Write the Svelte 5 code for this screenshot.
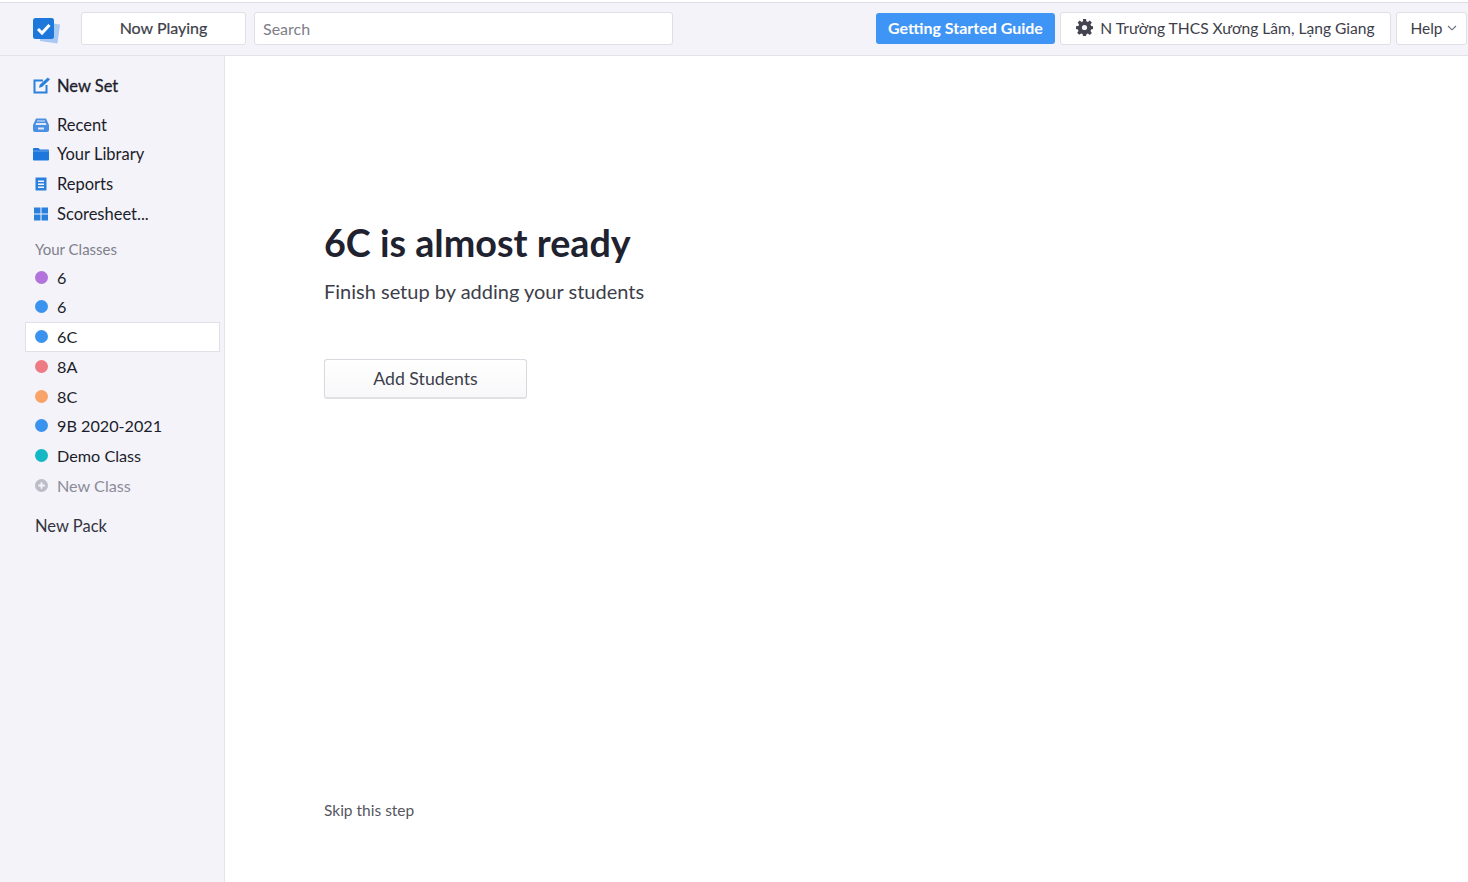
<script lang="ts">
  const nav = [
    { label: "Recent", icon: "recent" },
    { label: "Your Library", icon: "folder" },
    { label: "Reports", icon: "reports" },
    { label: "Scoresheet...", icon: "grid" }
  ];
  const classes = [
    { name: "6", color: "#b274dc" },
    { name: "6", color: "#3b93f0" },
    { name: "6C", color: "#3b93f0", active: true },
    { name: "8A", color: "#ee7a83" },
    { name: "8C", color: "#f9a369" },
    { name: "9B 2020-2021", color: "#3b93f0" },
    { name: "Demo Class", color: "#13b8c4" }
  ];
</script>

<div class="page">
  <header class="topbar">
    <svg class="logo" width="28" height="26" viewBox="0 0 28 26">
      <path d="M9 4l18 2.500-2.500 19L7 23z" fill="#a9c9f2" />
      <rect x="0" y="0" width="21" height="21" rx="2.500" fill="#1e78dc" />
      <path d="M5 11l4 4 7.500-8" fill="none" stroke="#fff" stroke-width="3" />
    </svg>
    <button class="btn now">Now Playing</button>
    <input class="search" placeholder="Search" />
    <div class="spacer"></div>
    <button class="guide">Getting Started Guide</button>
    <button class="btn school">
      <svg width="17" height="17" viewBox="0 0 17 17">
        <path d="M7 0h3l.4 2.300 1.500.6L13.800 1.600l2 2-1.300 1.900.6 1.500L17 7.300v2.800l-1.900.4-.6 1.500 1.300 1.900-2 2-1.900-1.300-1.500.6L10 17H7l-.4-1.900-1.500-.6-1.900 1.300-2-2 1.300-1.900-.6-1.500L0 10V7.300l2.400-.3.600-1.500-1.300-1.900 2-2 1.900 1.300 1.500-.6z" fill="#43444f" />
        <circle cx="8.500" cy="8.500" r="2.600" fill="#f3f3f9" />
      </svg>
      N Trường THCS Xương Lâm, Lạng Giang
    </button>
    <button class="btn help">
      Help
      <svg width="10" height="6" viewBox="0 0 10 6"><path d="M1 1l4 3.800L9 1" fill="none" stroke="#6a6b75" stroke-width="1.100" /></svg>
    </button>
  </header>

  <div class="body">
    <aside class="sidebar">
      <div class="item newset">
        <svg class="ico" width="18" height="17" viewBox="0 0 18 17">
          <path d="M10 3.500H1.500v12h12V8" fill="none" stroke="#2b80de" stroke-width="2" />
          <path d="M6 10.800l.7-3L14.800.5 17 2.500 9 10z" fill="#2b80de" />
        </svg>
        <span>New Set</span>
      </div>

      {#each nav as n}
        <div class="item">
          <svg class="ico" width="16" height="16" viewBox="0 0 16 16">
            {#if n.icon === "recent"}
              <path d="M3 1.500h10l3 6.500v5a2 2 0 0 1-2 2H2a2 2 0 0 1-2-2V8z" fill="#4a90e2" />
              <path d="M4 3.500h8v1H4zM3.300 6h9.400l.8 2H2.500zM5 10.500h6v2H5z" fill="#dfe8f6" />
            {:else if n.icon === "folder"}
              <path d="M0 3a1 1 0 0 1 1-1h4.500l1.500 1.500h8a1 1 0 0 1 1 1V13.500a1 1 0 0 1-1 1H1a1 1 0 0 1-1-1z" fill="#1e78dc" />
              <path d="M0 5h16" stroke="#f3f3f9" stroke-width=".6" opacity=".6" />
            {:else if n.icon === "reports"}
              <path d="M2.500 1.500h11v13h-11z" fill="#2b80de" />
              <path d="M5 4.500h6v1.500H5zM5 7.500h6V9H5zM5 10.500h6V12H5z" fill="#f3f3f9" />
            {:else}
              <path d="M1 1.500h6.500V7.500H1zM8.500 1.500H15V7.500H8.500zM1 8.500h6.500v6H1zM8.500 8.500H15v6H8.500z" fill="#2b80de" />
            {/if}
          </svg>
          <span>{n.label}</span>
        </div>
      {/each}

      <div class="heading">Your Classes</div>

      {#each classes as c}
        <div class="item cls" class:active={c.active}>
          <i class="dot" style:background={c.color}></i>
          <span>{c.name}</span>
        </div>
      {/each}

      <div class="item muted cls">
        <svg class="ico" width="13" height="13" viewBox="0 0 14 14">
          <circle cx="7" cy="7" r="7" fill="#bcbcc8" />
          <path d="M7 3.500v7M3.500 7h7" stroke="#f3f3f9" stroke-width="2" />
        </svg>
        <span>New Class</span>
      </div>

      <div class="pack">New Pack</div>
    </aside>

    <main class="main">
      <h1>6C is almost ready</h1>
      <p class="sub">Finish setup by adding your students</p>
      <button class="add">Add Students</button>
      <div class="skip">Skip this step</div>
    </main>
  </div>
</div>

<style>
  :global(body) {
    margin: 0;
    background: #fff;
    font-family: Lato, "Noto Sans", sans-serif;
  }
  .page {
    height: 882px;
    display: flex;
    flex-direction: column;
    overflow: hidden;
    color: #21222f;
  }
  button,
  input {
    font-family: inherit;
  }
  .topbar {
    height: 51px;
    box-sizing: content-box;
    margin-top: 2px;
    padding-bottom: 1px;
    border-top: 1px solid #dcdce2;
    border-bottom: 1px solid #e2e2e8;
    background: #f3f3f9;
    display: flex;
    align-items: center;
    padding-left: 33px;
  }
  .logo {
    margin-right: 20px;
    margin-top: 5px;
    flex: none;
  }
  .btn {
    height: 33px;
    box-sizing: border-box;
    background: #fff;
    border: 1px solid #dfdfe6;
    border-radius: 3px;
    font-size: 16px;
    color: #3d3e4a;
    padding: 0 0 2px;
  }
  .now {
    width: 165px;
    margin-right: 8px;
    -webkit-text-stroke: 0.2px #3d3e4a;
  }
  .search {
    width: 419px;
    height: 33px;
    box-sizing: border-box;
    border: 1px solid #dfdfe6;
    border-radius: 3px;
    padding: 0 8px;
    font-size: 16px;
    background: #fff;
  }
  .search::placeholder {
    color: #7d7e88;
    opacity: 1;
  }
  .spacer {
    flex: 1;
  }
  .guide {
    width: 179px;
    height: 31px;
    background: #3f95f5;
    color: #fff;
    border: 0;
    border-radius: 3px;
    font-size: 16px;
    font-weight: 700;
    margin-right: 5px;
    margin-top: -1px;
    padding: 0 0 2px;
  }
  .school {
    width: 331px;
    margin-right: 5px;
    display: flex;
    align-items: center;
    justify-content: center;
    gap: 7px;
    font-size: 15.600px;
  }
  .help {
    width: 71px;
    margin-right: 1px;
    display: flex;
    align-items: center;
    justify-content: center;
    gap: 4px;
    padding-left: 4px;
    font-size: 15.500px;
  }
  .body {
    flex: 1;
    display: flex;
    min-height: 0;
  }
  .sidebar {
    width: 225px;
    flex: none;
    box-sizing: border-box;
    background: #f3f3f9;
    border-right: 1px solid #e4e4ea;
    padding: 15px 4px 0 25px;
  }
  .item {
    height: 29.750px;
    display: flex;
    align-items: center;
    box-sizing: border-box;
    padding-left: 8px;
    font-size: 16.500px;
    color: #1c1d2a;
  }
  .item.cls {
    font-size: 16.200px;
  }
  .item span {
    margin-left: 8px;
  }
  .ico {
    flex: none;
    margin-left: 0;
  }
  .newset {
    margin-bottom: 9px;
  }
  .newset span {
    margin-left: 6px;
    -webkit-text-stroke: 0.3px #1c1d2a;
  }
  .heading {
    padding-left: 10px;
    margin-top: 8px;
    height: 25.500px;
    line-height: 24px;
    font-size: 15px;
    color: #7f808c;
  }
  .dot {
    width: 13px;
    height: 13px;
    border-radius: 50%;
    margin-left: 2px;
    flex: none;
  }
  .dot + span {
    margin-left: 9px;
  }
  .active {
    background: #fff;
    border: 1px solid #e0e0e6;
    padding-left: 7px;
  }
  .item.muted {
    color: #8b8c97;
  }
  .muted .ico {
    margin-left: 2px;
  }
  .muted span {
    margin-left: 9px;
  }
  .pack {
    margin-top: 16px;
    padding-left: 10px;
    font-size: 16.500px;
    line-height: 20px;
    color: #33343f;
  }
  .main {
    flex: 1;
    padding-left: 99px;
    display: flex;
    flex-direction: column;
    align-items: flex-start;
  }
  h1 {
    margin: 163px 0 0;
    font-size: 37.700px;
    line-height: 48px;
    font-weight: 700;
    color: #21222f;
  }
  .sub {
    margin: 12px 0 0;
    font-size: 20px;
    line-height: 24px;
    color: #3d3e4a;
  }
  .add {
    margin-top: 56px;
    width: 203px;
    height: 40px;
    background: linear-gradient(#fff, #f8f8fa);
    border: 1px solid #d8d8de;
    border-bottom: 2px solid #e0e0e5;
    border-radius: 3px;
    font-size: 17.700px;
    color: #3d3e4a;
    padding: 0;
  }
  .skip {
    margin-top: 401px;
    font-size: 15.500px;
    line-height: 20px;
    color: #55565f;
  }
</style>
